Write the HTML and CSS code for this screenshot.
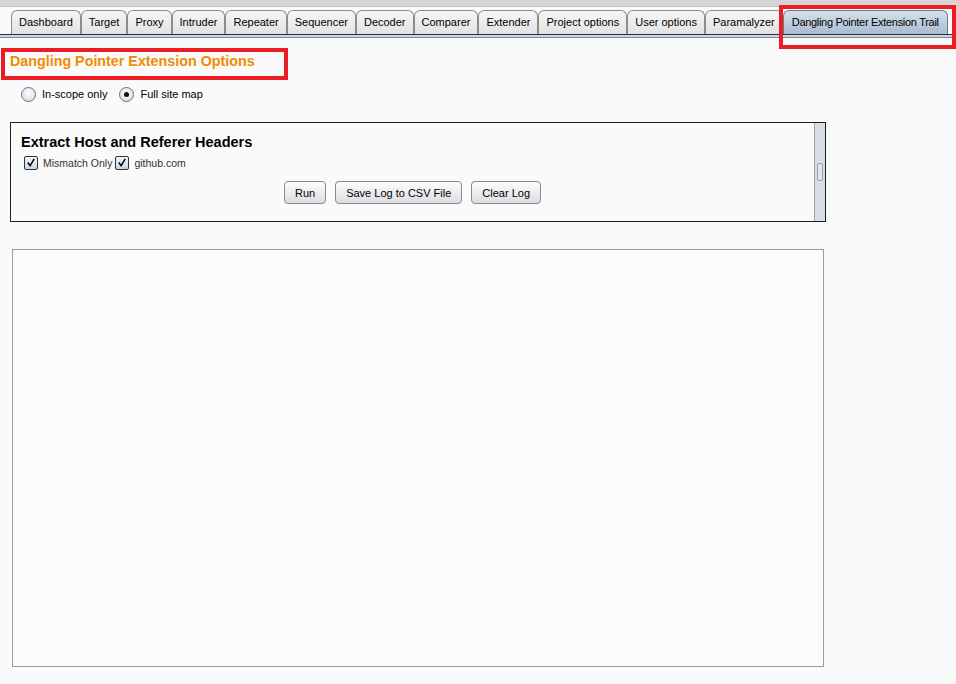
FILE: index.html
```html
<!DOCTYPE html>
<html>
<head>
<meta charset="utf-8">
<link rel="stylesheet" href="styles.css">
</head>
<body>
<div class="topstrip"></div>
<div class="tabbar">
  <div class="tab">Dashboard</div>
  <div class="tab">Target</div>
  <div class="tab">Proxy</div>
  <div class="tab">Intruder</div>
  <div class="tab">Repeater</div>
  <div class="tab">Sequencer</div>
  <div class="tab">Decoder</div>
  <div class="tab">Comparer</div>
  <div class="tab">Extender</div>
  <div class="tab">Project options</div>
  <div class="tab">User options</div>
  <div class="tab">Paramalyzer</div>
  <div class="tab active">Dangling Pointer Extension Trail<span class="mark"></span></div>
</div>
<div class="tabline"></div>

<div class="titlebox">Dangling Pointer Extension Options</div>

<div class="radios">
  <label class="radio"><span class="rdot"></span>In-scope only</label>
  <label class="radio"><span class="rdot on"></span>Full site map</label>
</div>

<div class="panel">
  <div class="panel-body">
    <div class="panel-title">Extract Host and Referer Headers</div>
    <div class="checks">
      <span class="cb"><svg width="13" height="13" viewBox="0 0 13 13"><path d="M3 6.5 L5.5 10 L10 2.5" fill="none" stroke="#000" stroke-width="1.6"/></svg></span><span class="cblabel">Mismatch Only</span>
      <span class="cb"><svg width="13" height="13" viewBox="0 0 13 13"><path d="M3 6.5 L5.5 10 L10 2.5" fill="none" stroke="#000" stroke-width="1.6"/></svg></span><span class="cblabel">github.com</span>
    </div>
    <div class="buttons">
      <button class="btn">Run</button>
      <button class="btn">Save Log to CSV File</button>
      <button class="btn">Clear Log</button>
    </div>
  </div>
  <div class="vscroll"><div class="thumb"></div></div>
</div>

<div class="logbox"></div>
</body>
</html>
```

FILE: styles.css
```css
html, body {
  margin: 0;
  padding: 0;
  background: #fafafa;
  font-family: "Liberation Sans", Arial, sans-serif;
  font-size: 11px;
  color: #000;
}
.topstrip {
  height: 6px;
  background: #d5d5d5;
  border-bottom: 1px solid #c4c4c4;
}
.tabbar {
  display: flex;
  padding-left: 11px;
  margin-top: 3px;
  height: 24px;
  align-items: flex-end;
}
.tab {
  position: relative;
  box-sizing: border-box;
  height: 24px;
  padding: 0 7px 1px 7px;
  border: 1px solid #8c8c8c;
  border-bottom: none;
  border-radius: 6px 6px 0 0;
  background: linear-gradient(#f7f7f7, #e2e2e2);
  display: flex;
  align-items: center;
  white-space: nowrap;
}
.tab.active {
  background: linear-gradient(#d6e0ec, #a9bbcf);
  border-color: #6e7a88;
  padding: 0 8px 1px 8px;
  letter-spacing: -0.3px;
}
.tab .mark {
  position: absolute;
  left: -5px;
  top: -6px;
  width: 169px;
  height: 36px;
  border: 4px solid #ec1c24;
}
.tabline {
  height: 2px;
  background: #c8d6e6;
  border-top: 1px solid #303030;
  border-bottom: 1px solid #7c8898;
}
.titlebox {
  box-sizing: border-box;
  margin: 10px 0 0 1px;
  width: 287px;
  height: 32px;
  border: 4px solid #ec1c24;
  padding: 1px 0 0 5px;
  color: #f08c00;
  font-weight: bold;
  font-size: 14.3px;
  font-family: "Liberation Sans", Arial, sans-serif;
}
.radios {
  display: flex;
  gap: 12px;
  margin: 5px 0 0 21px;
  height: 18px;
  align-items: center;
}
.radio {
  display: flex;
  align-items: center;
  gap: 6px;
}
.rdot {
  box-sizing: border-box;
  width: 15px;
  height: 15px;
  border-radius: 50%;
  border: 1px solid #5f7388;
  background: radial-gradient(circle at 50% 40%, #ffffff, #cfd8e2);
  position: relative;
}
.rdot.on::after {
  content: "";
  position: absolute;
  left: 4px;
  top: 4px;
  width: 5px;
  height: 5px;
  border-radius: 50%;
  background: #111;
}
.panel {
  box-sizing: border-box;
  margin: 19px 0 0 10px;
  width: 816px;
  height: 100px;
  border: 1px solid #1e1e1e;
  display: flex;
}
.panel-body {
  flex: 1;
  padding: 11px 0 0 10px;
}
.panel-title {
  font-family: "Liberation Sans", Arial, sans-serif;
  font-weight: bold;
  font-size: 14.5px;
  height: 18px;
}
.checks {
  display: flex;
  align-items: center;
  margin: 3px 0 0 3px;
  height: 15px;
}
.cb {
  box-sizing: border-box;
  width: 14px;
  height: 14px;
  border: 1px solid #2a3440;
  border-radius: 2px;
  background: linear-gradient(#f4f7fb, #c9d5e3);
  display: flex;
  align-items: center;
  justify-content: center;
}
.cb svg { display: block; }
.cblabel {
  margin: 0 3px 0 5px;
  color: #333;
  font-size: 10.5px;
}
.buttons {
  display: flex;
  justify-content: center;
  gap: 9px;
  margin: 11px 0 0 0;
  padding-right: 10px;
}
.btn {
  box-sizing: border-box;
  height: 23px;
  padding: 0 10px;
  border: 1px solid #8a8a8a;
  border-radius: 4px;
  background: linear-gradient(#fdfdfd, #dcdde2);
  font-family: "Liberation Sans", Arial, sans-serif;
  font-size: 11px;
  color: #000;
}
.vscroll {
  width: 10px;
  background: #d8dce5;
  border-left: 1px solid #a3a6ad;
  position: relative;
}
.thumb {
  position: absolute;
  left: 2px;
  top: 40px;
  width: 4px;
  height: 16px;
  border: 1px solid #9a9ea6;
  border-radius: 2px;
  background: #e2e5eb;
}
.logbox {
  box-sizing: border-box;
  margin: 27px 0 0 12px;
  width: 812px;
  height: 418px;
  border: 1px solid #9a9ba8;
  background: #fbfbfb;
}
```
